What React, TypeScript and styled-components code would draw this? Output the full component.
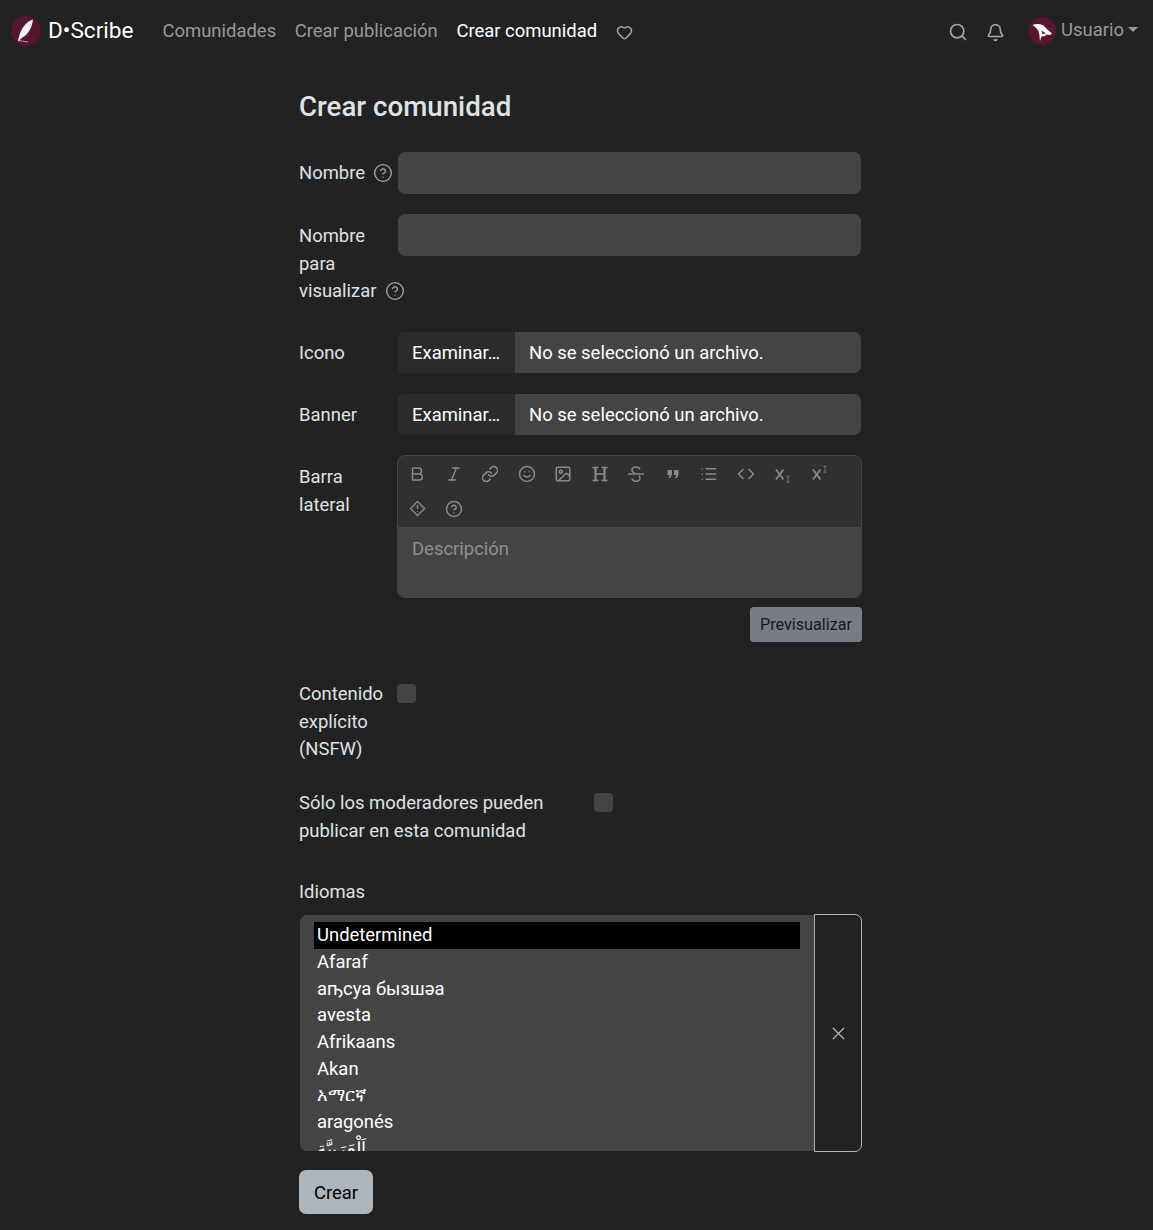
import React from 'react';
import styled, {createGlobalStyle} from "styled-components";
import {Bell, Bold, CircleHelp, Code, Heart, Image, Italic, Link, List, Search, Smile, X} from "lucide-react";

const languages = [
    "Undetermined",
    "Afaraf",
    "аҧсуа бызшәа",
    "avesta",
    "Afrikaans",
    "Akan",
    "አማርኛ",
    "aragonés",
    "اَلْعَرَبِيَّة",
]

const GlobalStyle = createGlobalStyle`
    * {
        box-sizing: border-box;
    }

    body {
        margin: 0;
        background-color: #222222;
        color: #dee2e6;
        font-family: Roboto, sans-serif;
        font-size: 18.45px;
        line-height: 27.7px;
    }
`

const Navbar = styled.nav`
    display: flex;
    align-items: center;
    height: 62px;
    padding: 0 14px 0 11px;
`

const Brand = styled.a`
    display: flex;
    align-items: center;
    gap: 7px;
    color: #ffffff;
    font-size: 22.6px;
    margin-right: 29px;
`

const NavLink = styled.a<{ $active?: boolean }>`
    color: ${props => props.$active ? "#ffffff" : "#959a9e"};
    margin-right: 18.6px;
    transform: translateY(1px);
`

const NavIcon = styled.span`
    display: flex;
    color: #a3a8ac;
    transform: translateY(1px);
`

const NavRight = styled.div`
    display: flex;
    align-items: center;
    margin-left: auto;
    gap: 18px;
`

const UserMenu = styled.a`
    display: flex;
    align-items: center;
    gap: 5px;
    margin-left: 5px;
    color: #959a9e;

    &::after {
        content: "";
        margin: 0 1px 3px -1px;
        border-top: 5px solid #959a9e;
        border-left: 5px solid transparent;
        border-right: 5px solid transparent;
    }
`

const Main = styled.main`
    width: 563px;
    margin-left: 299px;
`

const Title = styled.h1`
    margin: 0;
    padding-top: 27px;
    height: 90px;
    font-size: 27.7px;
    line-height: 36px;
    font-weight: 500;
`

const Row = styled.div<{ $gap?: number }>`
    display: flex;
    align-items: flex-start;
    margin-bottom: ${props => props.$gap ?? 20}px;
`

const Label = styled.label<{ $width?: number, $top?: number }>`
    flex: none;
    width: ${props => props.$width ?? 99}px;
    padding: ${props => props.$top ?? 7.5}px 15px 0 0;
`

const NoWrap = styled.span`
    white-space: nowrap;
`

const Help = styled(CircleHelp)`
    margin-left: 8px;
    vertical-align: -4px;
    color: #a3a8ac;
`

const Input = styled.input`
    display: block;
    width: 463px;
    height: 42px;
    border: 0;
    border-radius: 7px;
    background-color: #444444;
`

const FileBox = styled.div`
    display: flex;
    width: 463px;
    height: 41px;
    border-radius: 7px;
    overflow: hidden;
    background-color: #444444;
    color: #ffffff;
`

const FileButton = styled.span`
    display: flex;
    align-items: center;
    width: 117px;
    padding: 2px 0 0 14px;
    background-color: #2b2b2b;
`

const FileName = styled.span`
    display: flex;
    align-items: center;
    padding: 2px 0 0 14px;
`

const EditorColumn = styled.div`
    width: 465px;
    margin-left: -1px;
`

const Editor = styled.div`
    height: 143px;
    border: 1px solid #444444;
    border-radius: 8px;
    overflow: hidden;
    background-color: #303030;
`

const Toolbar = styled.div`
    display: flex;
    flex-wrap: wrap;
    align-content: flex-start;
    height: 71px;
    padding: 9px 0 0 1px;
    color: #8a8a8a;
`

const ToolButton = styled.span`
    display: flex;
    justify-content: center;
    align-items: center;
    width: 36.5px;
    height: 18px;
    margin-bottom: 17px;
`

const Description = styled.div`
    height: 71px;
    padding: 9px 14px;
    background-color: #444444;
    color: #8b8f92;
`

const PreviewRow = styled.div`
    display: flex;
    justify-content: flex-end;
    margin: 9px 0 31px;
`

const PreviewButton = styled.button`
    width: 112px;
    height: 35px;
    padding: 0;
    border: 0;
    border-radius: 4px;
    background-color: #787d85;
    color: #16181b;
    font: inherit;
    font-size: 16.2px;
`

const CheckBox = styled.span<{ $top?: number }>`
    display: block;
    flex: none;
    width: 19px;
    height: 19px;
    margin-top: ${props => props.$top ?? 11}px;
    border-radius: 4px;
    background-color: #444444;
`

const LanguageTitle = styled.div`
    margin: 0 0 7px;
`

const LanguageRow = styled.div`
    display: flex;
    height: 238px;
    margin-left: 1px;
`

const LanguageList = styled.ul`
    flex: 1;
    margin: 1px 0;
    padding: 7px 14px 0;
    list-style: none;
    overflow: hidden;
    border-radius: 7px 0 0 7px;
    background-color: #444444;
    color: #ffffff;
`

const LanguageItem = styled.li<{ $selected?: boolean }>`
    height: 26.7px;
    padding-left: 3px;
    line-height: 26px;
    background-color: ${props => props.$selected ? "#000000" : "transparent"};
`

const ClearButton = styled.button`
    display: flex;
    justify-content: center;
    align-items: center;
    width: 48px;
    padding: 1px 0 0;
    border: 1px solid #adb5bd;
    border-radius: 0 7px 7px 0;
    background: transparent;
    color: #adb5bd;
`

const SubmitButton = styled.button`
    display: block;
    width: 74px;
    height: 44px;
    margin-top: 18px;
    padding: 3px 0 0;
    border: 0;
    border-radius: 7px;
    background-color: #adb5bd;
    color: #000000;
    font: inherit;
`

const Logo = () => (
    <svg width="30" height="30" viewBox="0 0 30 30">
        <circle cx="15" cy="15" r="15" fill="#561530"/>
        <path d="M22 3.500C17 5 13 9 10.500 14 9 17 8 20 7 25l1 .5C9 23 10.500 22 13 20.500 17 18 21 12 22 3.500z" fill="#f2f2f2"/>
        <path d="M7.500 24.500l9.500 1.500" stroke="#c9b6bd" strokeWidth="0.8"/>
    </svg>
)

const Avatar = () => (
    <svg width="28" height="28" viewBox="0 0 28 28">
        <circle cx="14" cy="14" r="14" fill="#561530"/>
        <path fillRule="evenodd" fill="#ffffff" d="M4.500 8c3.500-1.500 8-1.300 11 .5l4.500 4.500 4 3.500-2 1.500-5-.5 1 1.500-4.500.5L12 24l-.5-4.500c0-5-2.500-9-7-11.500zM13.500 13.500l.8 3.500 3.700-.5z"/>
    </svg>
)

const HeaderIcon = () => (
    <svg width="18" height="18" viewBox="0 0 18 18" fill="none" stroke="currentColor">
        <path strokeWidth="2.200" d="M4.500 2v14M13.500 2v14"/>
        <path strokeWidth="1.400" d="M1.500 2.500h6M10.500 2.500h6M1.500 15.500h6M10.500 15.500h6M4.500 9h9"/>
    </svg>
)

const StrikeIcon = () => (
    <svg width="18" height="18" viewBox="0 0 18 18" fill="none" stroke="currentColor" strokeWidth="1.400">
        <path d="M1 9h16"/>
        <path d="M13 4.500C12.500 2.500 10.500 2 9 2 6.500 2 5 3.300 5 5c0 1.500 1 2.500 3 3.500M5 13.500c.5 2 2.500 2.700 4 2.700 2.500 0 4-1.300 4-3.200 0-1-.4-1.800-1.200-2.500"/>
    </svg>
)

const QuoteIcon = () => (
    <svg width="14" height="14" viewBox="0 0 14 14" fill="currentColor">
        <path d="M1.500 3h4.500v4.500L4.300 11H2.600l1-3H1.500zM8 3h4.500v4.500L10.800 11H9.100l1-3H8z"/>
    </svg>
)

const ScriptIcon = (props: { sup?: boolean }) => (
    <svg width="18" height="18" viewBox="0 0 18 18" fill="none" stroke="currentColor">
        <path strokeWidth="1.800" d="M3 4.500l7.500 10M10.500 4.500l-7.500 10"/>
        <path strokeWidth="0.700" d={props.sup ? "M13.500 1.200h3M15 1.200v6M13.500 7.200h3" : "M13.500 11.200h3M15 11.200v6M13.500 17.200h3"}/>
    </svg>
)

const SpoilerIcon = () => (
    <svg width="17" height="17" viewBox="0 0 17 17" fill="none" stroke="currentColor" strokeWidth="1.400" strokeLinejoin="round">
        <path d="M8.500 1.500l7 7-7 7-7-7z"/>
        <path d="M8.500 5v4M8.500 11v.8"/>
    </svg>
)

const Toolicons = [
    <Bold size={18}/>,
    <Italic size={18}/>,
    <Link size={18}/>,
    <Smile size={18}/>,
    <Image size={18}/>,
    <HeaderIcon/>,
    <StrikeIcon/>,
    <QuoteIcon/>,
    <List size={18}/>,
    <Code size={18}/>,
    <ScriptIcon/>,
    <ScriptIcon sup/>,
    <SpoilerIcon/>,
    <CircleHelp size={18}/>,
]

export default function App() {
    return (
        <>
            <GlobalStyle/>
            <Navbar>
                <Brand><Logo/>D•Scribe</Brand>
                <NavLink>Comunidades</NavLink>
                <NavLink>Crear publicación</NavLink>
                <NavLink $active>Crear comunidad</NavLink>
                <NavIcon><Heart size={17}/></NavIcon>
                <NavRight>
                    <NavIcon><Search size={20}/></NavIcon>
                    <NavIcon><Bell size={19}/></NavIcon>
                    <UserMenu><Avatar/>Usuario</UserMenu>
                </NavRight>
            </Navbar>
            <Main>
                <Title>Crear comunidad</Title>
                <Row>
                    <Label><NoWrap>Nombre<Help size={20} strokeWidth={1.6}/></NoWrap></Label>
                    <Input/>
                </Row>
                <Row $gap={26}>
                    <Label $top={8.8}>Nombre para <NoWrap>visualizar<Help size={20} strokeWidth={1.6}/></NoWrap></Label>
                    <Input/>
                </Row>
                <Row $gap={21}>
                    <Label $top={8}>Icono</Label>
                    <FileBox><FileButton>Examinar…</FileButton><FileName>No se seleccionó un archivo.</FileName></FileBox>
                </Row>
                <Row>
                    <Label $top={8}>Banner</Label>
                    <FileBox><FileButton>Examinar…</FileButton><FileName>No se seleccionó un archivo.</FileName></FileBox>
                </Row>
                <Row $gap={0}>
                    <Label $top={9.5}>Barra lateral</Label>
                    <EditorColumn>
                        <Editor>
                            <Toolbar>
                                {Toolicons.map((icon, i) => <ToolButton key={i}>{icon}</ToolButton>)}
                            </Toolbar>
                            <Description>Descripción</Description>
                        </Editor>
                        <PreviewRow><PreviewButton>Previsualizar</PreviewButton></PreviewRow>
                    </EditorColumn>
                </Row>
                <Row $gap={18.5}>
                    <Label $width={98} $top={8}>Contenido explícito (NSFW)</Label>
                    <CheckBox/>
                </Row>
                <Row $gap={34}>
                    <Label $width={295}>Sólo los moderadores pueden publicar en esta comunidad</Label>
                    <CheckBox $top={10}/>
                </Row>
                <LanguageTitle>Idiomas</LanguageTitle>
                <LanguageRow>
                    <LanguageList>
                        {languages.map((lang, i) => <LanguageItem key={lang} $selected={i === 0}>{lang}</LanguageItem>)}
                    </LanguageList>
                    <ClearButton><X size={21} strokeWidth={1.5}/></ClearButton>
                </LanguageRow>
                <SubmitButton>Crear</SubmitButton>
            </Main>
        </>
    );
}
